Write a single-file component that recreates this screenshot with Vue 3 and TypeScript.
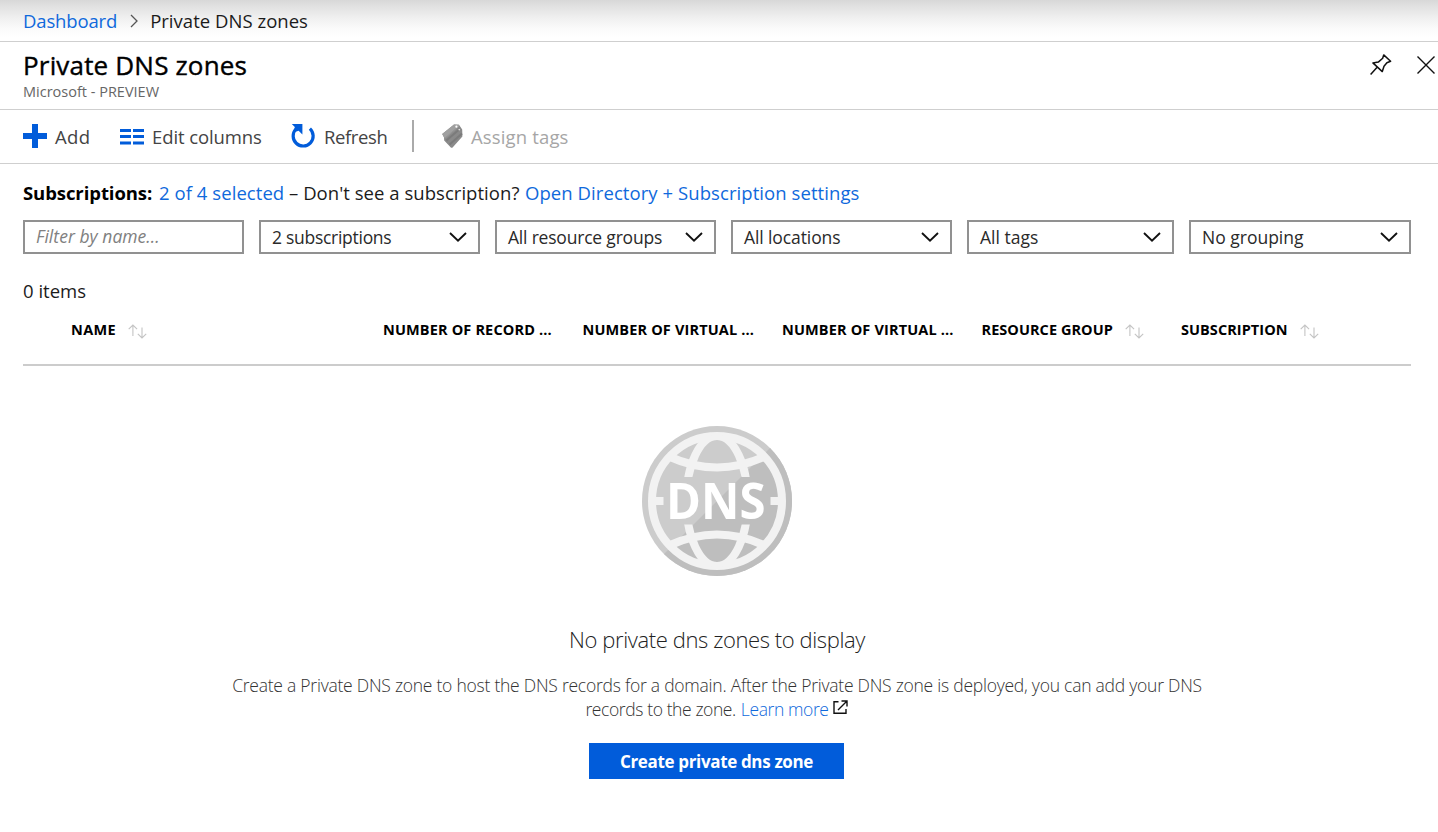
<script setup lang="ts">
interface Filter {
  label: string
  kind: string
}

interface Column {
  label: string
  sortable: boolean
  kind: string
}

const filters: Filter[] = [
  { label: '2 subscriptions', kind: 'by-subs' },
  { label: 'All resource groups', kind: 'by-group' },
  { label: 'All locations', kind: 'by-location' },
  { label: 'All tags', kind: 'by-tag' },
  { label: 'No grouping', kind: 'grouping' },
]

const columns: Column[] = [
  { label: 'NAME', sortable: true, kind: 'name' },
  { label: 'NUMBER OF RECORD ...', sortable: false, kind: 'long' },
  { label: 'NUMBER OF VIRTUAL ...', sortable: false, kind: 'long' },
  { label: 'NUMBER OF VIRTUAL ...', sortable: false, kind: 'long' },
  { label: 'RESOURCE GROUP', sortable: true, kind: 'short' },
  { label: 'SUBSCRIPTION', sortable: true, kind: 'short' },
]
</script>

<template>
  <div class="page">
    <nav class="breadcrumb">
      <a class="crumb-link">Dashboard</a>
      <svg class="crumb-sep" width="8" height="14" viewBox="0 0 8 14">
        <path d="M1 1 L7 7 L1 13" fill="none" stroke="#555" stroke-width="1.3" />
      </svg>
      <span class="crumb-current">Private DNS zones</span>
    </nav>

    <header class="title-bar">
      <div class="titles">
        <h1><span>Private DNS zones</span></h1>
        <p><span>Microsoft - PREVIEW</span></p>
      </div>
      <div class="window-actions">
        <svg width="22" height="22" viewBox="0 0 22 22">
          <path
            d="M13.7 0.9 L20.6 7.3 L16.9 8.7 L14 12.2 L12.3 17.6 L2.9 8.9 L8.3 8.1 L12.7 4.2 Z M6.9 13.6 L0.6 20.6"
            fill="none" stroke="#111" stroke-width="1.5" stroke-linejoin="round"
          />
        </svg>
        <svg width="18" height="18" viewBox="0 0 18 18">
          <path d="M0.5 0.5 L17.5 17.5 M17.5 0.5 L0.5 17.5" stroke="#111" stroke-width="1.4" />
        </svg>
      </div>
    </header>

    <div class="toolbar">
      <button class="tool add">
        <svg width="24" height="24" viewBox="0 0 24 24">
          <path d="M9 0h6v9h9v6h-9v9H9v-9H0V9h9z" fill="#015cda" />
        </svg>
        <span>Add</span>
      </button>
      <button class="tool edit">
        <svg width="24" height="24" viewBox="0 0 24 24">
          <path
            d="M0 5h11v3H0z M13 5H24v3H13z M0 11h11v3H0z M13 11H24v3H13z M0 17.5h11v3H0z M13 17.5H24v3H13z"
            fill="#015cda"
          />
        </svg>
        <span>Edit columns</span>
      </button>
      <button class="tool refresh">
        <svg width="24" height="24" viewBox="0 0 24 24">
          <path d="M18.9 4.6 A10 10 0 1 1 5 5" fill="none" stroke="#015cda" stroke-width="3.2" />
          <path d="M0.8 0 H11.4 V10.6 L7.6 6.8 L5.4 7.6 L3.2 6.2 L3.8 3 Z" fill="#015cda" />
        </svg>
        <span>Refresh</span>
      </button>
      <i class="divider"></i>
      <button class="tool assign">
        <svg width="22" height="24" viewBox="0 0 22 24">
          <path d="M0.2 10 L12 0.4 L17 0.8 L20.2 5.4 L20.4 12.6 L10.6 23.4 Q9.7 24.2 8.8 23.4 L2.2 16.4 L2 13.4 Z" fill="#8a8a8a" />
          <path d="M0.2 10 L12 0.4 L17 0.8 L17 2.6 L3 14.6 Z" fill="#a0a0a0" />
          <path d="M4.4 16.6 L18 4.8 M7.6 20.4 L20 9.4" stroke="#7b7b7b" stroke-width="2" />
          <path d="M2.4 14.6 L15.6 3.2" stroke="#949494" stroke-width="1" />
          <circle cx="14.4" cy="2.7" r="1.1" fill="#fff" />
          <circle cx="17.3" cy="5.6" r="0.9" fill="#ddd" />
        </svg>
        <span>Assign tags</span>
      </button>
    </div>

    <main class="content">
      <p class="subscriptions">
        <strong>Subscriptions:</strong>
        <a class="selected">2 of 4 selected</a>
        <span class="hint">– Don't see a subscription?</span>
        <a class="settings">Open Directory + Subscription settings</a>
      </p>

      <div class="filters">
        <div class="field filter-input"><span>Filter by name...</span></div>
        <div v-for="f in filters" :key="f.kind" class="field" :class="f.kind">
          <span>{{ f.label }}</span>
          <svg width="18" height="10" viewBox="0 0 18 10">
            <path d="M1 1 L9 8.6 L17 1" fill="none" stroke="#111" stroke-width="1.9" />
          </svg>
        </div>
      </div>

      <p class="count"><span>0 items</span></p>

      <div class="table-head">
        <div v-for="(c, i) in columns" :key="i" class="th" :class="c.kind">
          <span>{{ c.label }}</span>
          <svg v-if="c.sortable" width="19" height="15" viewBox="0 0 19 15">
            <path
              d="M4.9 12 V1.2 M0.7 5.2 L4.9 1 L9.1 5.2 M14 3.4 V13.8 M9.8 9.8 L14 14 L18.2 9.8"
              fill="none" stroke="#c4c4c4" stroke-width="1.1"
            />
          </svg>
        </div>
      </div>

      <section class="empty">
        <svg class="globe" width="150" height="150" viewBox="0 0 150 150">
          <defs>
            <clipPath id="meridian-clip">
              <rect x="0" y="0" width="150" height="51" />
              <rect x="0" y="98.5" width="150" height="52" />
            </clipPath>
            <clipPath id="disc-clip"><circle cx="75" cy="75" r="66" /></clipPath>
            <clipPath id="shade-clip"><path d="M150 0 V150 H0 Z" /></clipPath>
          </defs>
          <circle cx="75" cy="75" r="75" fill="#cccccc" />
          <circle cx="75" cy="75" r="75" fill="#bebebe" clip-path="url(#shade-clip)" />
          <circle cx="75" cy="75" r="65" fill="none" stroke="#f2f2f2" stroke-width="8" />
          <g fill="none" stroke="#f2f2f2" stroke-width="8" clip-path="url(#disc-clip)">
            <ellipse cx="75" cy="75" rx="30.7" ry="65" clip-path="url(#meridian-clip)" />
            <path d="M27 30.5 Q75 52.5 123 30.5" />
            <path d="M27 119.5 Q75 97.5 123 119.5" />
            <path d="M12 75 H21.5 M128.5 75 H138" />
          </g>
          <text x="24" y="93" textLength="99.5" lengthAdjust="spacingAndGlyphs" class="globe-text">DNS</text>
        </svg>
        <h2><span>No private dns zones to display</span></h2>
        <p class="line one"><span>Create a Private DNS zone to host the DNS records for a domain. After the Private DNS zone is deployed, you can add your DNS</span></p>
        <p class="line two">
          <span>records to the zone.</span>
          <a>Learn more</a>
          <svg width="15" height="15" viewBox="0 0 15 15">
            <path d="M5.5 1.7 H1 V13.3 H13 V9 M8.5 1 H14 V6.5 M14 1 L5 10" fill="none" stroke="#111" stroke-width="1.4" />
          </svg>
        </p>
        <button class="create"><span>Create private dns zone</span></button>
      </section>
    </main>
  </div>
</template>

<style>
body {
  margin: 0;
  background: #fff;
}
</style>

<style scoped>
.page {
  width: 1438px;
  height: 832px;
  overflow: hidden;
  box-sizing: border-box;
  background: #fff;
  color: #1b1b1b;
  font-family: 'Open Sans', 'Noto Sans', sans-serif;
  font-size: 18.5px;
  white-space: nowrap;
}
h1, h2, p {
  margin: 0;
  font-weight: 400;
}
a {
  color: #0f69dc;
}
svg {
  flex: none;
  display: block;
}
.breadcrumb {
  display: flex;
  align-items: center;
  height: 42px;
  padding: 0 23px;
  box-sizing: border-box;
  border-bottom: 1px solid #cfcfcf;
  background: linear-gradient(#d8d8d8 0, #e2e2e2 7px, #f0f0f0 18px, #fafafa 28px, #fff 38px);
}
.crumb-link {
  letter-spacing: -0.15px;
}
.crumb-current {
  letter-spacing: 0.03px;
}
.crumb-sep {
  margin: 0 12px 0 13px;
}
.title-bar {
  display: flex;
  justify-content: space-between;
  height: 68px;
  box-sizing: border-box;
  padding: 0 3px 0 23px;
  border-bottom: 1px solid #cfcfcf;
}
h1 {
  height: 36px;
  line-height: 47px;
  font-size: 26px;
  letter-spacing: 0.18px;
  -webkit-text-stroke: 0.4px #000;
  color: #000;
}
.titles p {
  line-height: 27px;
  font-size: 14.5px;
  color: #666;
}
.window-actions {
  display: flex;
  gap: 25px;
  padding-top: 12px;
}
.window-actions svg:last-child {
  margin-top: 2px;
}
.toolbar {
  display: flex;
  align-items: center;
  height: 54px;
  box-sizing: border-box;
  padding: 0 23px;
  border-bottom: 1px solid #cfcfcf;
}
button {
  border: 0;
  padding: 0;
  background: none;
  font: inherit;
  color: inherit;
}
.tool {
  display: flex;
  align-items: center;
  gap: 8px;
  color: #444;
  font-size: 18.5px;
}
.tool svg {
  margin-bottom: 2px;
}
.add {
  width: 67px;
  letter-spacing: 0.4px;
}
.edit {
  width: 142px;
  margin-left: 30px;
  letter-spacing: -0.1px;
}
.refresh {
  width: 96px;
  margin-left: 29px;
  gap: 9px;
  letter-spacing: -0.4px;
}
.divider {
  width: 2px;
  height: 32px;
  margin: 0 28px 1px 25px;
  background: #aaa;
}
.assign {
  gap: 7px;
  color: #a6a6a6;
  letter-spacing: 0.15px;
}
.content {
  padding: 0 27px 0 23px;
}
.subscriptions {
  display: flex;
  height: 56px;
  line-height: 57px;
}
strong {
  width: 136px;
  font-weight: 700;
  letter-spacing: -0.08px;
  color: #000;
}
.selected {
  width: 130px;
  letter-spacing: 0.06px;
}
.hint {
  width: 236px;
  letter-spacing: 0.04px;
}
.settings {
  letter-spacing: 0.07px;
}
.filters {
  display: grid;
  grid-template-columns: 221px 221px 221px 221px 207px 222px;
  column-gap: 15px;
}
.field {
  display: flex;
  align-items: center;
  justify-content: space-between;
  height: 34px;
  box-sizing: border-box;
  border: 2px solid #919191;
  padding: 0 11px;
  font-size: 17.5px;
  color: #2a2a2a;
}
.by-subs {
  letter-spacing: -0.28px;
}
.by-group {
  letter-spacing: -0.2px;
}
.by-location {
  letter-spacing: -0.1px;
}
.filter-input {
  padding-bottom: 2px;
  font-style: italic;
  color: #808080;
  letter-spacing: 0.04px;
}
.count {
  height: 56px;
  line-height: 73px;
}
.table-head {
  display: grid;
  grid-template-columns: 312px 199.5px 199.5px 199.5px 199.5px auto;
  height: 56px;
  box-sizing: border-box;
  padding-left: 48px;
  border-bottom: 2px solid #ccc;
  font-size: 14.5px;
  font-weight: 700;
  color: #000;
  line-height: 39px;
}
.th {
  display: flex;
  gap: 12px;
}
.th svg {
  margin-top: 14px;
}
.name {
  letter-spacing: 0.35px;
}
.long {
  letter-spacing: 0.15px;
}
.short {
  letter-spacing: 0.06px;
}
.empty {
  display: flex;
  flex-direction: column;
  align-items: center;
  padding-top: 60px;
}
.globe-text {
  font-size: 50px;
  font-weight: 700;
  fill: #fff;
}
h2 {
  margin-top: 47px;
  height: 50px;
  line-height: 32px;
  font-size: 22px;
  letter-spacing: -0.4px;
  font-weight: 300;
  color: #222;
}
.line {
  display: flex;
  height: 24px;
  line-height: 24px;
  font-size: 17.5px;
  letter-spacing: -0.24px;
  font-weight: 300;
  color: #333;
}
.two {
  gap: 5px;
  letter-spacing: -0.4px;
}
.two svg {
  margin: 3px 1px 0 -1px;
}
.create {
  width: 255px;
  height: 36px;
  margin: 22px 1px 0 0;
  background: #015cda;
  color: #fff;
  font-size: 17px;
  font-weight: 700;
  letter-spacing: -0.34px;
}
</style>
